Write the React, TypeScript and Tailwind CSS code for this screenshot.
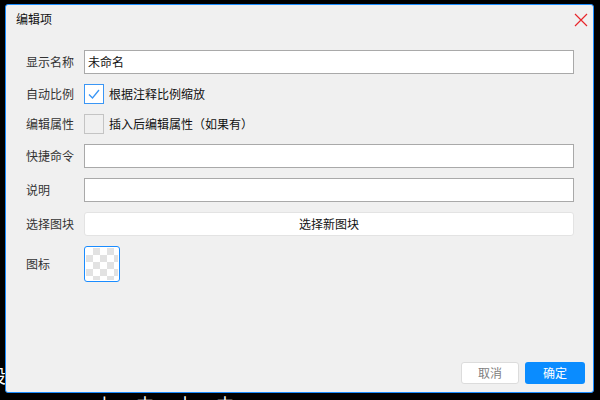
import React from "react";

const FONT = "font-['Microsoft_YaHei','Noto_Sans_CJK_SC',sans-serif]";

function Row({ label, children, h }: { label: string; children: React.ReactNode; h: string }) {
  return (
    <div className={`flex items-center ${h}`}>
      <div className="w-[58px] shrink-0 text-[12px] text-[#333]">{label}</div>
      <div className="flex-1 flex items-center h-full">{children}</div>
    </div>
  );
}

function TextBox({ value }: { value?: string }) {
  return (
    <div className="w-full h-full border border-[#a9a9a9] bg-white flex items-center px-[3px] text-[12px] text-[#111]">
      {value}
    </div>
  );
}

function Check({ checked, text }: { checked?: boolean; text: string }) {
  return (
    <div className="flex items-center gap-[5px]">
      <div
        className={`w-[20px] h-[20px] border flex items-center justify-center ${
          checked ? "border-[#3a96f5] bg-white" : "border-[#c4c4c4] bg-[#f0f0f0]"
        }`}
      >
        {checked && (
          <svg width="14" height="14" viewBox="0 0 14 14" fill="none">
            <path d="M2 7.5 L5.5 11 L12 3" stroke="#3a96f5" strokeWidth="1.3" />
          </svg>
        )}
      </div>
      <span className="text-[12px] text-[#111]">{text}</span>
    </div>
  );
}

export default function App() {
  return (
    <div className={`relative w-[600px] h-[400px] bg-black overflow-hidden ${FONT}`}>
      {/* desktop text peeking behind the window */}
      <div className="absolute left-[-12px] top-[362px] text-[18px] text-white">设</div>
      <div className="absolute left-[96px] top-[391px] flex gap-[22px] text-[18px] text-white">
        <span>上</span>
        <span>中</span>
        <span>十</span>
        <span>中</span>
      </div>

      <div className="relative pl-[5px] pt-[4px]">
        <div className="w-[589px] h-[389px] bg-[#f0f0f0] border border-[#1a8cff] rounded-[3px] flex flex-col">
          {/* title bar */}
          <div className="h-[27px] flex items-center justify-between pl-[10px] pr-[5px]">
            <span className="text-[12px] text-[#111]">编辑项</span>
            <svg width="14" height="14" viewBox="0 0 14 14" className="mt-[2px]">
              <path d="M1 1 L13 13 M13 1 L1 13" stroke="#e8262b" strokeWidth="1.2" />
            </svg>
          </div>

          {/* form */}
          <div className="flex flex-col gap-[10px] pt-[18px] pl-[20px] pr-[19px]">
            <Row label="显示名称" h="h-[24px]">
              <TextBox value="未命名" />
            </Row>
            <Row label="自动比例" h="h-[20px]">
              <Check checked text="根据注释比例缩放" />
            </Row>
            <Row label="编辑属性" h="h-[20px]">
              <Check text="插入后编辑属性（如果有）" />
            </Row>
            <Row label="快捷命令" h="h-[24px]">
              <TextBox />
            </Row>
            <Row label="说明" h="h-[24px]">
              <TextBox />
            </Row>
            <Row label="选择图块" h="h-[24px]">
              <div className="w-full h-full bg-white border border-[#e3e3e3] rounded-[3px] flex items-center justify-center text-[12px] text-[#111]">
                选择新图块
              </div>
            </Row>
            <Row label="图标" h="h-[36px]">
              <div className="w-[36px] h-[36px] border border-[#1a8cff] rounded-[3px] bg-white p-[1px]">
                <div className="w-full h-full bg-[image:conic-gradient(#e2e2e2_25%,#ffffff_0_50%,#e2e2e2_0_75%,#ffffff_0)] bg-size-[14px_14px]" />
              </div>
            </Row>
          </div>

          {/* footer buttons */}
          <div className="mt-auto flex justify-end gap-[6px] pr-[8px] pb-[8px]">
            <button className="w-[58px] h-[22px] bg-white border border-[#dcdcdc] rounded-[3px] text-[12px] text-[#808080]">
              取消
            </button>
            <button className="w-[60px] h-[22px] bg-[#0a8cff] rounded-[3px] text-[12px] text-white">
              确定
            </button>
          </div>
        </div>
      </div>
    </div>
  );
}
